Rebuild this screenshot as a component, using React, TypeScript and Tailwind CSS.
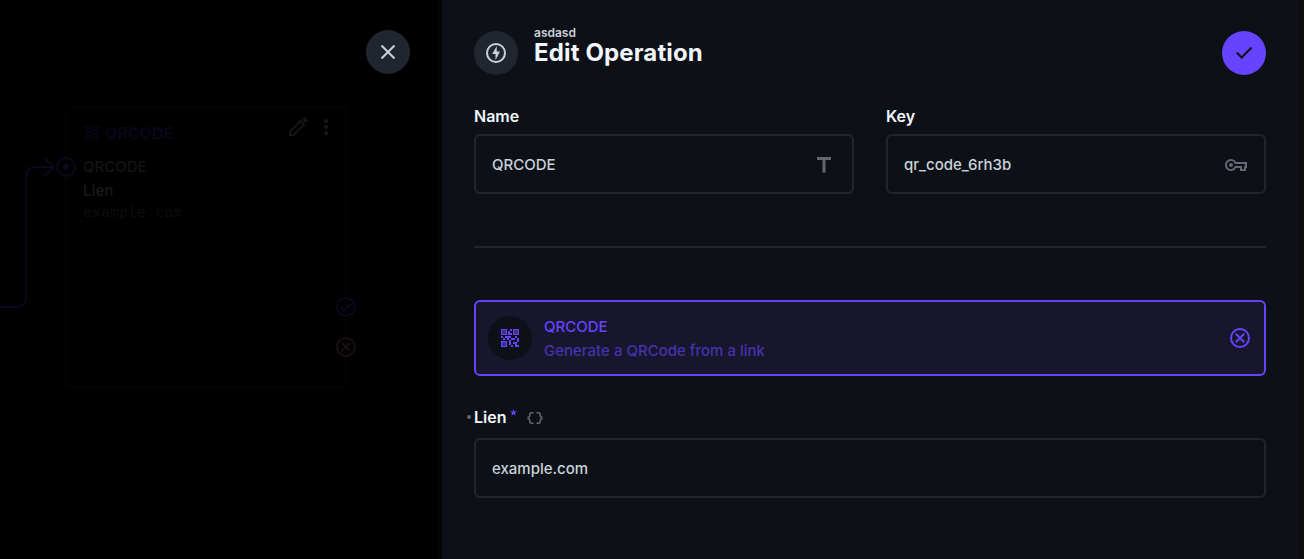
import type { ReactNode } from "react";
import { MdClose, MdDataObject, MdMoreVert, MdQrCode2 } from "react-icons/md";

function Glyph({ children, className = "" }: { children: ReactNode; className?: string }) {
  return (
    <svg width="24" height="24" viewBox="0 0 24 24" fill="none" stroke="currentColor" strokeWidth="2" className={className}>
      {children}
    </svg>
  );
}

function CancelIcon({ className = "" }: { className?: string }) {
  return (
    <Glyph className={className}>
      <circle cx="12" cy="12" r="9" />
      <path d="M7.800 7.800l8.400 8.400M16.200 7.800l-8.400 8.400" />
    </Glyph>
  );
}

function Canvas() {
  return (
    <div className="relative h-full w-[442px] shrink-0 overflow-hidden bg-black">
      <svg className="absolute inset-0" width="442" height="559" fill="none">
        <defs>
          <pattern id="dots" x="5" y="5" width="20" height="20" patternUnits="userSpaceOnUse">
            <rect x="0.5" y="0.5" width="1.5" height="1.5" fill="#060606" />
          </pattern>
        </defs>
        <rect width="442" height="559" fill="url(#dots)" />
        <rect x="437" width="5" height="559" fill="#040404" />
      </svg>
      <div className="absolute top-[106px] left-[65px] h-[282px] w-[282px] rounded-md border-2 border-[#040405] bg-black px-4 pt-[13px]">
        <div className="flex h-6 items-center gap-1 text-[#0a0619]">
          <MdQrCode2 size={18} />
          <span className="text-base leading-6 font-semibold">QRCODE</span>
        </div>
        <div className="mt-[10px] text-[15px] leading-6 font-medium text-[#131415]">QRCODE</div>
        <div className="text-[15px] leading-6 font-semibold text-[#161718]">Lien</div>
        <div className="font-['DejaVu_Sans_Mono',monospace] text-[14px] leading-[19px] tracking-[0.6px] text-[#0d0e0f]">example.com</div>
      </div>
      <Glyph className="absolute top-[115px] left-[286px] text-[#141516]">
        <path d="M4 20v-3.500L14.500 6 18 9.500 7.500 20z" />
        <path d="M16 4.500l2-2q.8-.6 1.600 0l2 2q.6.8 0 1.600l-2 2z" fill="currentColor" stroke="none" />
      </Glyph>
      <MdMoreVert size={24} className="absolute top-[115px] left-[314px] text-[#161718]" />
      <svg className="absolute inset-0" width="442" height="559" fill="none" stroke="#0c071f" strokeWidth="2" strokeLinecap="round">
        <path d="M0 307H16Q26 307 26 297V177Q26 167 36 167H53M45 158.500L53.500 167L45 175.500" />
      </svg>
      <Glyph className="absolute top-[154.500px] left-[54px] text-[#0c071f]">
        <circle cx="12" cy="12" r="9" />
        <circle cx="12" cy="12" r="3" fill="currentColor" stroke="none" />
      </Glyph>
      <Glyph className="absolute top-[294.500px] left-[334px] text-[#0c071f]">
        <circle cx="12" cy="12" r="9" />
        <path d="M7 12.200l3.400 3.400 6.600-6.800" />
      </Glyph>
      <CancelIcon className="absolute top-[334.500px] left-[334px] text-[#180e14]" />
      <button className="absolute top-[30px] left-[366px] flex size-11 items-center justify-center rounded-full bg-[#21262e] text-[#c9d1d9]">
        <Glyph>
          <path d="M5.500 5.500l13 13M18.500 5.500l-13 13" />
        </Glyph>
      </button>
    </div>
  );
}

type FieldProps = { label: ReactNode; value: string; icon?: ReactNode; labelGap?: string };

function Field({ label, value, icon, labelGap = "mb-2" }: FieldProps) {
  return (
    <div className="min-w-0 flex-1">
      <div className={`${labelGap} flex h-[19px] items-center text-base leading-[19px] font-semibold text-[#f0f6fc]`}>{label}</div>
      <div className="flex h-[60px] items-center justify-between rounded-md border-2 border-[#21262e] px-4 pt-[2px] text-[15px] font-medium text-[#c9d1d9]">
        <span>{value}</span>
        <span className="text-[#666672]">{icon}</span>
      </div>
    </div>
  );
}

export default function App() {
  return (
    <div className="flex h-[559px] w-[1304px] overflow-hidden bg-[#0d0d0d] font-[Inter,sans-serif]">
      <Canvas />
      <main className="h-full w-[856px] bg-[#0d1117] px-8 pt-[31px]">
        <header className="flex h-11 items-center">
          <span className="flex size-11 items-center justify-center rounded-full bg-[#21262e] text-[#c9d1d9]">
            <Glyph className="mt-[-1px]">
              <circle cx="12" cy="12" r="9" />
              <path d="M12.700 5v5.500H16L11.500 19v-6H8.200z" fill="currentColor" stroke="none" />
            </Glyph>
          </span>
          <div className="ml-4 h-11 flex-1">
            <div className="-mt-1 text-xs leading-3 font-semibold text-[#c9d1d9]">asdasd</div>
            <h1 className="text-2xl leading-7 font-bold tracking-[0.14px] text-[#f0f6fc]">Edit Operation</h1>
          </div>
          <button className="flex size-11 items-center justify-center rounded-full bg-[#6644ff] text-[#0d1117]">
            <Glyph>
              <path d="M4.700 11.500l5 5L19.500 6.500" />
            </Glyph>
          </button>
        </header>
        <div className="mt-8 flex gap-8">
          <Field
            label="Name"
            value="QRCODE"
            icon={
              <Glyph>
                <path d="M5 5.500h14M12 5.500v14" strokeWidth="3" />
              </Glyph>
            }
          />
          <Field
            label="Key"
            value="qr_code_6rh3b"
            icon={
              <Glyph>
                <path d="M11.500 10H22v4h-1v3h-4v-3h-5.500A5 5 0 1 1 11.500 10z" />
                <circle cx="7" cy="12" r="2" fill="currentColor" stroke="none" />
              </Glyph>
            }
          />
        </div>
        <hr className="mt-[52px] border-t-2 border-[#21262e]" />
        <div className="mt-[52px] flex h-[76px] items-center rounded-md border-2 border-[#6644ff] bg-[#17162d] px-3 text-[#6644ff]">
          <span className="flex size-11 items-center justify-center rounded-full bg-[#0d1117]">
            <MdQrCode2 size={24} className="mt-[-1px]" />
          </span>
          <div className="ml-3 flex-1 pt-[2px] text-[15px] leading-6">
            <div className="font-medium">QRCODE</div>
            <div className="font-medium text-[#4632ad]">Generate a QRCode from a link</div>
          </div>
          <CancelIcon className="mt-[-1px]" />
        </div>
        <div className="mt-8">
          <Field
            labelGap="mb-[11px]"
            label={
              <span className="-ml-[7px] flex items-center">
                <span className="mt-[-1px] mr-[3px] size-1 rounded-full bg-[#666672]" />
                <span>Lien</span>
                <svg className="mt-[-11px] ml-1" width="7" height="7" viewBox="0 0 24 24" fill="#6644ff">
                  <path d="M12 0l3 8.500h9l-7.200 5.400 2.700 9.100L12 17.600 4.500 23l2.700-9.100L0 8.500h9z" />
                </svg>
                <MdDataObject size={18} className="ml-[9px] text-[#666672]" />
              </span>
            }
            value="example.com"
          />
        </div>
      </main>
    </div>
  );
}
